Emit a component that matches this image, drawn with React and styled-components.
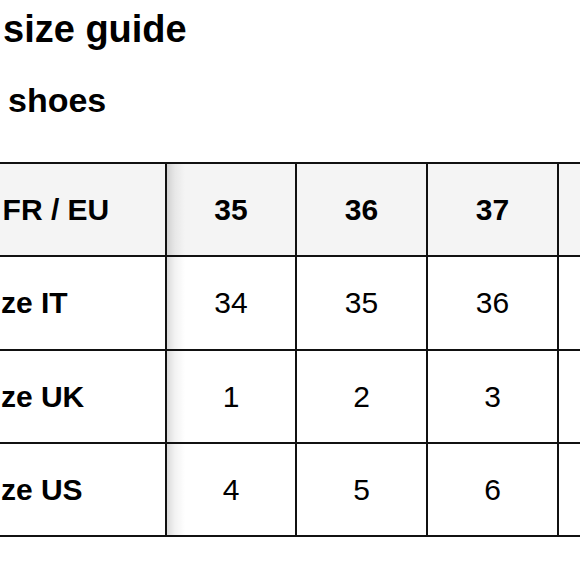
import styled, { createGlobalStyle } from "styled-components";

const GlobalStyle = createGlobalStyle`
  html, body {
    margin: 0;
    padding: 0;
    background: #ffffff;
    overflow: hidden;
  }
  body {
    font-family: "Liberation Sans", Arial, Helvetica, sans-serif;
    color: #000000;
  }
`;

const sizes = [
  { label: "Size IT", values: ["34", "35", "36", "37"] },
  { label: "Size UK", values: ["1", "2", "3", "4"] },
  { label: "Size US", values: ["4", "5", "6", "7"] },
];

const header = ["35", "36", "37", "38"];

export default function App() {
  return (
    <>
      <GlobalStyle />
      <Page>
        <Title>size guide</Title>
        <Subtitle>shoes</Subtitle>
        <Table>
          <Cell $head $label $bold>
            <HeadLabel>FR / EU</HeadLabel>
          </Cell>
          {header.map((v, i) => (
            <Cell key={v} $head $shade={i === 0} $bold>
              {v}
            </Cell>
          ))}
          {sizes.map((row) => (
            <Row key={row.label} row={row} />
          ))}
        </Table>
      </Page>
    </>
  );
}

function Row({ row }) {
  return (
    <>
      <Cell $label $bold>
        {row.label}
      </Cell>
      {row.values.map((v, i) => (
        <Cell key={i} $shade={i === 0}>
          {v}
        </Cell>
      ))}
    </>
  );
}

const Page = styled.div`
  width: 660px;
  margin-left: -40px;
  display: flex;
  flex-direction: column;
`;

const Title = styled.h1`
  margin: 10px 0 0 43px;
  font-size: 38px;
  line-height: 1;
  font-weight: 700;
`;

const Subtitle = styled.h2`
  margin: 35px 0 0 48px;
  font-size: 34px;
  line-height: 1;
  font-weight: 700;
`;

const Table = styled.div`
  margin-top: 45px;
  display: grid;
  grid-template-columns: 207px 130px 131px 131px 131px;
  grid-template-rows: 93px 94px 93px 93px;
  border-top: 2px solid #111111;
`;

const Cell = styled.div`
  box-sizing: border-box;
  display: flex;
  align-items: center;
  justify-content: ${(p) => (p.$label ? "flex-start" : "center")};
  padding-left: ${(p) => (p.$label ? "12.6px" : "0")};
  border-right: 2px solid #111111;
  border-bottom: 2px solid #111111;
  background-color: ${(p) => (p.$head ? "#f4f4f4" : "#ffffff")};
  background-image: ${(p) =>
    p.$shade
      ? "linear-gradient(to right, rgba(0,0,0,0.14), rgba(0,0,0,0.05) 8px, rgba(0,0,0,0) 18px)"
      : "none"};
  font-size: 30px;
  font-weight: ${(p) => (p.$bold ? 700 : 400)};
  white-space: nowrap;
`;

const HeadLabel = styled.span`
  padding-left: 30px;
`;
